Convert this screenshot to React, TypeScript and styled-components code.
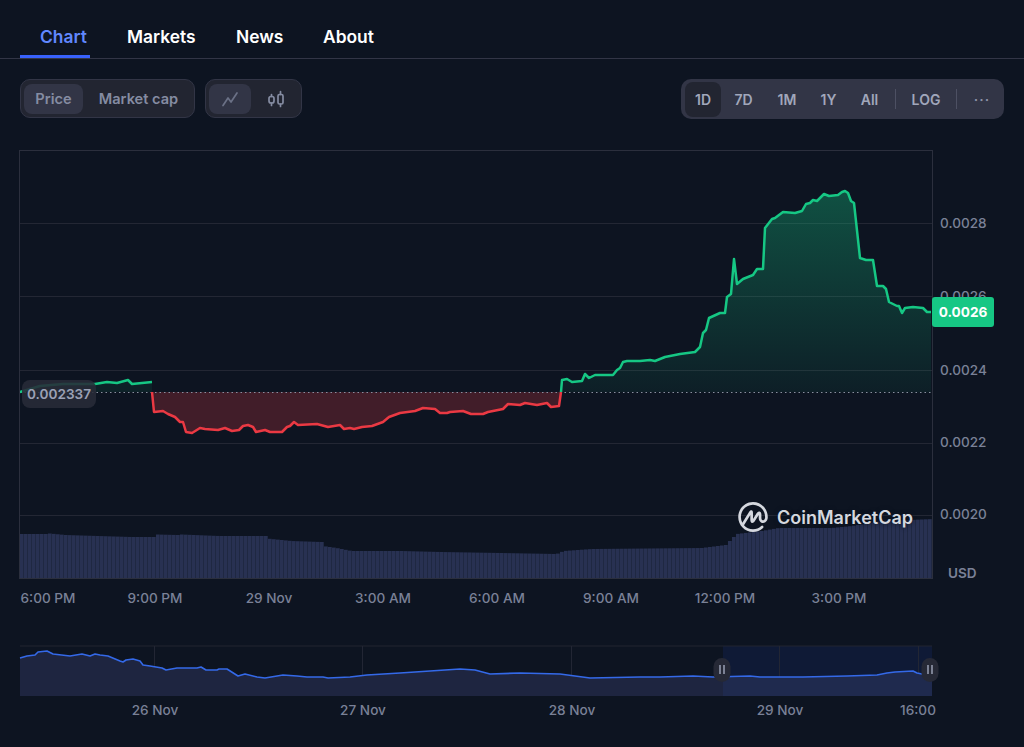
import React from 'react';
import styled, { createGlobalStyle } from 'styled-components';
import { SiCoinmarketcap } from 'react-icons/si';

type Pt = [number, number];

const GlobalStyle = createGlobalStyle`
  html, body {
    margin: 0;
    padding: 0;
    background-color: #0d1421;
  }
  body {
    font-family: Inter, "Liberation Sans", sans-serif;
    min-height: 747px;
    overflow: hidden;
  }
`;

const Page = styled.div`
  width: 1024px;
  height: 747px;
  background-color: #0d1421;
`;

const TabBar = styled.nav`
  display: flex;
  height: 59px;
  box-sizing: border-box;
  padding-left: 20px;
  border-bottom: 1px solid #323546;
`;

const Tab = styled.a<{ $active?: boolean; $width: number }>`
  display: flex;
  align-items: center;
  width: ${p => p.$width}px;
  height: 58px;
  padding: 17px 0 0 ${p => (p.$active ? 20 : 37)}px;
  box-sizing: border-box;
  font-size: 17.4px;
  font-weight: 600;
  white-space: nowrap;
  color: ${p => (p.$active ? '#6188ff' : '#ffffff')};
  border-bottom: 3px solid ${p => (p.$active ? '#3861fb' : 'transparent')};
`;

const Toolbar = styled.div`
  display: flex;
  justify-content: space-between;
  align-items: flex-start;
  padding: 20px 20px 0;
  height: 91px;
  box-sizing: border-box;
`;

const Groups = styled.div`
  display: flex;
  gap: 10px;
`;

const Group = styled.div`
  display: flex;
  align-items: center;
  height: 39px;
  padding-left: 3px;
  box-sizing: border-box;
  background-color: #222531;
  border: 1px solid #323546;
  border-radius: 10px;
`;

const Segment = styled.button<{ $active?: boolean; $width: number }>`
  display: flex;
  align-items: center;
  justify-content: center;
  width: ${p => p.$width}px;
  height: 30px;
  padding: 0;
  border: 0;
  border-radius: 8px;
  font-family: inherit;
  font-size: 14.6px;
  font-weight: 600;
  color: #858ca2;
  background-color: ${p => (p.$active ? '#323546' : 'transparent')};
`;

const RangeGroup = styled.div`
  display: flex;
  align-items: center;
  width: 323px;
  height: 40px;
  padding-left: 4px;
  box-sizing: border-box;
  background-color: #323546;
  border-radius: 10px;
`;

const RangeButton = styled.button<{ $active?: boolean; $width: number }>`
  display: flex;
  flex-shrink: 0;
  align-items: center;
  justify-content: center;
  width: ${p => p.$width}px;
  height: 35px;
  padding: 0;
  border: 0;
  border-radius: 8px;
  font-family: inherit;
  font-size: 14px;
  font-weight: 600;
  color: #a1a7bb;
  background-color: ${p => (p.$active ? '#222531' : 'transparent')};
`;

const MoreDots = styled(RangeButton)`
  padding-left: 3px;
  letter-spacing: 1px;
  color: #8d93a8;
`;

const Divider = styled.span<{ $gap?: number }>`
  width: 1px;
  height: 20px;
  margin-left: ${p => p.$gap ?? 0}px;
  background-color: #4d5063;
`;

const ChartBox = styled.div`
  position: relative;
  height: 464px;
`;

const Plot = styled.svg`
  display: block;
`;

const AxisText = styled.text<{ $bold?: boolean }>`
  font-family: Inter, "Liberation Sans", sans-serif;
  font-size: 13.6px;
  font-weight: ${p => (p.$bold ? 600 : 500)};
  fill: #7a8197;
`;

const PriceBadge = styled.div`
  position: absolute;
  left: 932px;
  top: 147px;
  width: 62px;
  height: 30px;
  display: flex;
  align-items: center;
  justify-content: center;
  border-radius: 3px;
  background-color: #16c784;
  color: #ffffff;
  font-size: 13.6px;
  font-weight: 700;
`;

const BaseLabel = styled.div`
  position: absolute;
  left: 22px;
  top: 230px;
  width: 74px;
  height: 28px;
  display: flex;
  align-items: center;
  justify-content: center;
  border-radius: 8px;
  background-color: rgba(40, 43, 56, 0.88);
  color: #9ba1b5;
  font-size: 13.6px;
  font-weight: 600;
`;

const Watermark = styled.div`
  position: absolute;
  left: 738px;
  top: 352px;
  display: flex;
  align-items: center;
  gap: 9px;
  color: #d5d8df;
  font-size: 18px;
  font-weight: 600;
  text-shadow: 0 0 4px #0d1421;
`;

const Overview = styled.svg`
  display: block;
  margin-top: 27px;
`;

// price line, read off the picture
const greenLeft: Pt[] = [[20, 392], [40, 386], [63, 384], [90, 384], [95, 384], [107, 382], [117, 383], [128, 380], [132, 384], [152, 382], [152, 392]];
const red: Pt[] = [[152, 392], [154, 412], [163, 411], [168, 414], [175, 417], [180, 422], [183, 422], [186, 432], [192, 433], [200, 428], [205, 429], [218, 430], [225, 428], [232, 431], [239, 430], [243, 426], [248, 425], [253, 427], [256, 432], [265, 430], [270, 432], [282, 432], [287, 427], [290, 426], [294, 422], [298, 425], [317, 424], [328, 427], [340, 425], [344, 429], [350, 428], [354, 429], [362, 427], [372, 426], [383, 422], [389, 417], [400, 413], [415, 411], [423, 408], [435, 409], [440, 413], [447, 413], [450, 412], [463, 411], [471, 414], [483, 414], [488, 412], [503, 409], [508, 404], [520, 405], [525, 403], [537, 405], [547, 403], [551, 407], [559, 406], [561, 392]];
const greenRight: Pt[] = [[561, 392], [562, 380], [567, 379], [572, 382], [582, 381], [585, 374], [589, 378], [595, 375], [613, 375], [617, 370], [620, 368], [623, 362], [627, 361], [640, 361], [650, 360], [655, 361], [665, 357], [680, 354], [695, 352], [700, 347], [703, 333], [706, 330], [709, 318], [720, 313], [725, 313], [727, 297], [731, 294], [734, 259], [737, 284], [743, 279], [753, 275], [757, 269], [763, 269], [765, 228], [772, 219], [775, 218], [783, 212], [795, 213], [802, 211], [806, 204], [810, 203], [813, 200], [817, 201], [824, 194], [829, 196], [838, 195], [842, 192], [845, 191], [848, 193], [851, 201], [854, 203], [860, 258], [866, 260], [873, 260], [877, 286], [883, 286], [886, 289], [889, 302], [897, 306], [899, 306], [902, 313], [905, 308], [913, 307], [923, 308], [927, 312], [931, 312]];

const volumeTops: Pt[] = [[19, 534], [47, 534], [48, 533.5], [64, 535], [130, 537], [155, 537], [156, 534.5], [176, 535], [180, 534.5], [218, 536], [264, 536], [265, 538.5], [290, 541], [320, 542], [321, 546], [335, 548], [350, 551], [400, 551], [440, 552], [500, 553], [555, 554], [562, 551], [590, 549], [700, 548], [724, 545], [735, 534], [760, 531], [777, 528], [830, 528], [850, 526], [880, 521], [932, 519]];

const miniLine: Pt[] = [[20, 658], [27, 656], [35, 655], [38, 652], [47, 651], [53, 654], [70, 656], [82, 654], [90, 656], [95, 654], [100, 655], [108, 656], [120, 661], [123, 662], [126, 660], [133, 659], [140, 661], [143, 665], [150, 666], [162, 668], [166, 670], [177, 668], [197, 668], [201, 667], [206, 670], [217, 670], [219, 669], [227, 669], [238, 676], [245, 674], [257, 677], [265, 678], [283, 675], [297, 676], [307, 677], [323, 677], [328, 678], [350, 677], [367, 675], [400, 673], [430, 671], [460, 669], [475, 670], [490, 674], [520, 673], [560, 674], [590, 678], [640, 677], [660, 677], [693, 676], [713, 677], [750, 676], [760, 677], [803, 677], [847, 676], [877, 675], [887, 673], [895, 672], [913, 671], [917, 673], [932, 676]];

const TOP = 150;
const MINI_TOP = 641;

const toPath = (pts: Pt[]) =>
  pts.map(([x, y], i) => `${i ? 'L' : 'M'}${x} ${y}`).join(' ');

const topAt = (x: number) => {
  for (let i = 1; i < volumeTops.length; i++) {
    const [x0, y0] = volumeTops[i - 1];
    const [x1, y1] = volumeTops[i];
    if (x <= x1) return y0 + ((y1 - y0) * (x - x0)) / (x1 - x0);
  }
  return 519;
};

const bars: number[] = [];
for (let x = 20; x < 932; x += 4) bars.push(x);

const grid = [223, 296, 370, 443, 515];
const prices: [string, number][] = [['0.0028', 223], ['0.0026', 296], ['0.0024', 370], ['0.0022', 442], ['0.0020', 514]];
const times: [string, number][] = [['6:00 PM', 48], ['9:00 PM', 155], ['29 Nov', 269], ['3:00 AM', 383], ['6:00 AM', 497], ['9:00 AM', 611], ['12:00 PM', 725], ['3:00 PM', 839]];
const miniGrid = [154, 362, 571, 779, 918];
const days: [string, number][] = [['26 Nov', 155], ['27 Nov', 363], ['28 Nov', 572], ['29 Nov', 780], ['16:00', 918]];

const LineIcon = () => (
  <svg width="18" height="18" viewBox="0 0 18 18" fill="none" stroke="#6b7186" strokeWidth="1.7" strokeLinecap="round" strokeLinejoin="round">
    <path d="M2 15.5 L7 8 L10 12 L16 3" />
  </svg>
);

const CandleIcon = () => (
  <svg width="16" height="18" viewBox="0 0 16 18" fill="none" stroke="#858ca2" strokeWidth="1.7" strokeLinecap="round" strokeLinejoin="round">
    <rect x="1" y="6.5" width="5" height="6.5" rx="2" />
    <path d="M3.5 4.5 V6.5 M3.5 13 V15.5" />
    <rect x="10" y="4.5" width="5" height="9.5" rx="1.5" />
    <path d="M12.5 1.5 V4.5 M12.5 14 V16.5" />
  </svg>
);

const Handle = ({ x }: { x: number }) => (
  <g>
    <rect x={x - 8.5} y={17} width={17} height={24} rx={8.5} fill="#262936" />
    <path d={`M${x - 2} 24 V33 M${x + 2} 24 V33`} stroke="#a1a7bb" strokeWidth="1.4" />
  </g>
);

export default function App() {
  const lastX = greenRight[greenRight.length - 1][0];
  return (
    <Page>
      <GlobalStyle />
      <TabBar>
        <Tab $active $width={70}>Chart</Tab>
        <Tab $width={109}>Markets</Tab>
        <Tab $width={87}>News</Tab>
        <Tab $width={100}>About</Tab>
      </TabBar>

      <Toolbar>
        <Groups>
          <Group>
            <Segment $active $width={59}>Price</Segment>
            <Segment $width={111}>Market cap</Segment>
          </Group>
          <Group>
            <Segment $active $width={42}><LineIcon /></Segment>
            <Segment $width={50}><CandleIcon /></Segment>
          </Group>
        </Groups>
        <RangeGroup>
          <RangeButton $active $width={36}>1D</RangeButton>
          <RangeButton $width={45}>7D</RangeButton>
          <RangeButton $width={42}>1M</RangeButton>
          <RangeButton $width={41}>1Y</RangeButton>
          <RangeButton $width={41}>All</RangeButton>
          <Divider $gap={5} />
          <RangeButton $width={60}>LOG</RangeButton>
          <Divider />
          <MoreDots $width={47}>···</MoreDots>
        </RangeGroup>
      </Toolbar>

      <ChartBox>
        <Plot width="1024" height="464" viewBox={`0 ${TOP} 1024 464`}>
          <defs>
            <linearGradient id="upFill" gradientUnits="userSpaceOnUse" x1="0" y1="190" x2="0" y2="392">
              <stop offset="0" stopColor="#16c784" stopOpacity="0.34" />
              <stop offset="1" stopColor="#16c784" stopOpacity="0.06" />
            </linearGradient>
          </defs>

          {grid.map(y => (
            <line key={y} x1="19" x2="932" y1={y + 0.5} y2={y + 0.5} stroke="#232734" />
          ))}

          <path d={`${toPath(greenRight)} L${lastX} 392.5 Z`} fill="url(#upFill)" />
          <path d={`${toPath(greenLeft)} Z`} fill="#16c784" fillOpacity="0.08" />
          <path d={`${toPath(red)} Z`} fill="#ea3943" fillOpacity="0.24" />

          {bars.map(x => (
            <rect key={x} x={x} y={topAt(x)} width="3.7" height={578 - topAt(x)} fill="#283152" />
          ))}

          <line x1="20" x2="932" y1="392.5" y2="392.5" stroke="#8a8f9f" strokeWidth="1.2" strokeDasharray="1.5 3" />

          <path d={toPath(greenLeft.slice(0, -1))} fill="none" stroke="#16c784" strokeWidth="2.5" strokeLinejoin="round" />
          <path d={toPath(red)} fill="none" stroke="#ea3943" strokeWidth="2.5" strokeLinejoin="round" />
          <path d={toPath(greenRight)} fill="none" stroke="#16c784" strokeWidth="2.5" strokeLinejoin="round" />

          <rect x="19.5" y="150.5" width="913" height="428" fill="none" stroke="#2b2f3d" />

          {prices.map(([label, y]) => (
            <AxisText key={label} x="940" y={y + 5}>{label}</AxisText>
          ))}
          <AxisText $bold x="948" y="578">USD</AxisText>
          {times.map(([label, x]) => (
            <AxisText key={label} x={x} y="603" textAnchor="middle">{label}</AxisText>
          ))}
        </Plot>
        <PriceBadge>0.0026</PriceBadge>
        <BaseLabel>0.002337</BaseLabel>
        <Watermark>
          <SiCoinmarketcap size={30} />
          CoinMarketCap
        </Watermark>
      </ChartBox>

      <Overview width="1024" height="80" viewBox={`0 ${MINI_TOP} 1024 80`}>
        <rect x="723" y="646" width="209" height="50" fill="#0f1a36" />
        <line x1="20" x2="932" y1="646" y2="646" stroke="#222531" />
        {miniGrid.map(x => (
          <line key={x} x1={x + 0.5} x2={x + 0.5} y1="646" y2="696" stroke="#222634" />
        ))}
        <path d={`${toPath(miniLine)} L932 696 L20 696 Z`} fill="#1e2540" />
        <path d="M723 677 L750 676 L760 677 L803 677 L847 676 L877 675 L887 673 L895 672 L913 671 L917 673 L932 676 L932 696 L723 696 Z" fill="#1f2a4e" />
        <path d={toPath(miniLine)} fill="none" stroke="#3469e8" strokeWidth="1.6" strokeLinejoin="round" />
        <g transform={`translate(0 ${MINI_TOP})`}>
          <Handle x={722} />
          <Handle x={930} />
        </g>
        {days.map(([label, x]) => (
          <AxisText key={label} x={x} y="715" textAnchor="middle">{label}</AxisText>
        ))}
      </Overview>
    </Page>
  );
}
